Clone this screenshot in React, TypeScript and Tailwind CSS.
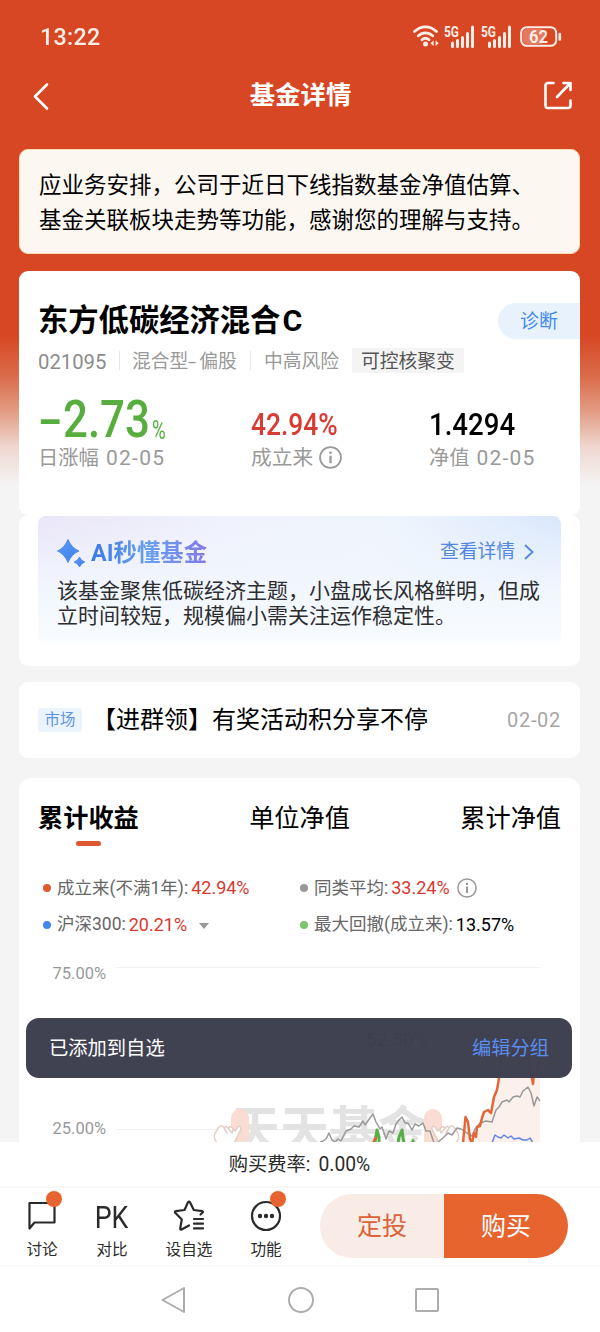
import type { ReactNode } from "react";

const NEWS = { tag: "市场", title: "【进群领】有奖活动积分享不停", date: "02-02" };

function StatusBar() {
    return (
        <div className="flex h-[60px] items-center justify-between pt-[14px] pr-[38px] pl-[40px] text-[#fdeee8]">
            <span className="origin-left scale-x-[0.970] text-[24px] font-medium leading-none tracking-[0.300px]">13:22</span>
            <svg width="150" height="26" viewBox="0 0 150 26" fill="none">
                {/* wifi */}
                <g stroke="currentColor" strokeWidth="2.800" strokeLinecap="round">
                    <path d="M2.500 7.500C9 1.200 18 1.200 24.500 7.500" />
                    <path d="M6.300 11.800C10.500 7.800 16.500 7.800 20.700 11.800" />
                    <path d="M10 15.800C12.200 13.900 14.800 13.900 17 15.800" />
                </g>
                <circle cx="13.500" cy="20" r="2.500" fill="currentColor" />
                <path d="M21.600 16.500v5.400L18.500 19.200zM23.600 16.500v5.400l3.100-2.700z" fill="currentColor" />
                {/* mobile signal, two sims */}
                {[0, 37].map(x => (
                    <g key={x} transform={`translate(${x} 0)`}>
                        <text
                            x="32"
                            y="12.500"
                            fill="currentColor"
                            fontSize="14"
                            fontWeight="700"
                            textLength="15"
                            lengthAdjust="spacingAndGlyphs"
                        >
                            5G
                        </text>
                        <path
                            d="M40.500 22.500v-3.500M45.500 22.500v-6M50.500 22.500v-9M55.500 22.500v-13M60.500 22.500V3"
                            stroke="currentColor"
                            strokeWidth="3"
                            strokeLinecap="round"
                        />
                    </g>
                ))}
                {/* battery */}
                <rect x="109.200" y="3.200" width="35" height="18.600" rx="5.500" stroke="currentColor" strokeWidth="2" />
                <rect x="111" y="5" width="21" height="15" rx="4" fill="currentColor" opacity="0.300" />
                <path d="M147.800 10v5.500" stroke="currentColor" strokeWidth="2.600" strokeLinecap="round" />
                <text
                    x="117"
                    y="19"
                    fill="currentColor"
                    fontSize="18"
                    fontWeight="600"
                    textLength="19"
                    lengthAdjust="spacingAndGlyphs"
                >
                    62
                </text>
            </svg>
        </div>
    );
}

function Header() {
    return (
        <header className="flex h-[72px] items-center justify-between pr-[27px] pl-[32px] text-white">
            <svg width="20" height="32" viewBox="0 0 20 32" fill="none" stroke="currentColor" strokeWidth="2.600" strokeLinecap="round" strokeLinejoin="round">
                <path d="M15 4.500L3 16.500l12 12" />
            </svg>
            <h1 className="pl-[6px] text-[25.400px] font-bold leading-none">基金详情</h1>
            <svg width="30" height="32" viewBox="0 0 30 32" fill="none" stroke="currentColor" strokeWidth="2.600" strokeLinecap="round" strokeLinejoin="round">
                <path d="M10.500 3H5a2.500 2.500 0 0 0-2.500 2.500v20A2.500 2.500 0 0 0 5 28h20a2.500 2.500 0 0 0 2.500-2.500V20.500" />
                <path d="M14 17L27 3.500M20.500 3H27.500V10" />
            </svg>
        </header>
    );
}

function InfoIcon({ size }: { size: number }) {
    return (
        <svg width={size} height={size} viewBox="0 0 22 22" fill="none" stroke="#999" strokeWidth="1.700">
            <circle cx="11" cy="11" r="10" />
            <path d="M11 9.300v7.200" strokeWidth="2.200" />
            <path d="M11 5.300v2.300" strokeWidth="2.200" />
        </svg>
    );
}

function FundCard() {
    return (
        <section className="mt-[17px] h-[244px] rounded-[9px] bg-white pt-[30px] pl-[19px]">
            <div className="flex h-[40px] items-center justify-between">
                <h2 className="text-[30.300px] font-bold leading-none text-black">
                    东方低碳经济混合<span className="pl-[2px]">C</span>
                </h2>
                <button type="button" className="h-[36px] w-[82px] rounded-l-full bg-[#e8f2fd] text-[19px] leading-none text-[#4289ee]">
                    诊断
                </button>
            </div>

            <div className="flex h-[39px] items-center text-[18.800px] leading-none text-[#999]">
                <span className="w-[81px] pt-[3px] text-[20.300px] text-[#8c8c8c]">021095</span>
                <span className="h-[19px] w-px bg-[#e6e6e6]" />
                <span className="w-[130px] pt-[3px] pl-[12px] whitespace-nowrap">
                    混合型<span className="inline-block w-[11px] origin-left scale-x-[1.600]">-</span>偏股
                </span>
                <span className="h-[19px] w-px bg-[#e6e6e6]" />
                <span className="w-[101px] pt-[3px] pl-[13px]">中高风险</span>
                <span className="flex h-[25px] items-center rounded-[2px] bg-[#f4f4f4] px-[9px] pt-[3px] text-[#555]">可控核聚变</span>
            </div>

            <div className="flex pt-[9px] leading-none">
                <div className="w-[213px]">
                    <div className="flex h-[56px] items-end text-[#57ae3e]">
                        <span className="w-[25px] origin-left scale-x-[1.450] text-[50px] font-medium">-</span>
                        <span className="w-[89px] origin-left scale-x-[0.860] text-[51px] font-medium">2.73</span>
                        <span className="origin-left scale-x-[0.720] pb-[2px] text-[26px]">%</span>
                    </div>
                    <div className="mt-[3px] text-[20.300px] text-[#999]">
                        日涨幅 <span className="pl-[2px] text-[21px] tracking-[1.300px]">02-05</span>
                    </div>
                </div>
                <div className="w-[178px]">
                    <div className="flex h-[56px] items-end text-[#d93a31]">
                        <span className="origin-left scale-x-[0.850] pb-[5px] text-[31px] font-medium">42.94%</span>
                    </div>
                    <div className="mt-[3px] flex gap-[6px] text-[20.700px] text-[#999]">
                        成立来
                        <span className="-mt-[2px]">
                            <InfoIcon size={23} />
                        </span>
                    </div>
                </div>
                <div>
                    <div className="flex h-[56px] items-end text-black">
                        <span className="origin-left scale-x-[0.890] pb-[5px] text-[31px] font-medium">1.4294</span>
                    </div>
                    <div className="mt-[3px] text-[20.300px] text-[#999]">
                        净值 <span className="pl-[2px] text-[21px] tracking-[1.200px]">02-05</span>
                    </div>
                </div>
            </div>
        </section>
    );
}

function AiCard() {
    return (
        <section className="h-[151px] rounded-[9px] bg-white px-[19px] pt-px">
            <div className="h-[130px] rounded-[8px] bg-[linear-gradient(180deg,transparent_0%,#f2f7fe_60%,#f7fbff_92%,#fff_100%),linear-gradient(90deg,#eae6f8_0%,#eff1fc_35%,#f0f5fd_65%,#d9e7fc_100%)] pt-[20px] pl-[19px]">
                <div className="flex h-[32px] items-center justify-between pr-[26px]">
                    <div className="flex items-center gap-[5px]">
                        <svg width="29" height="29" viewBox="0 0 29 29">
                            <defs>
                                <linearGradient id="spark" x1="0" y1="0" x2="1" y2="1">
                                    <stop offset="0" stopColor="#5c9af4" />
                                    <stop offset="1" stopColor="#3f7ee8" />
                                </linearGradient>
                            </defs>
                            <path d="M11 1.500Q14.500 10 22 13Q14.500 16 11 24.500Q7.500 16 0.500 13Q7.500 10 11 1.500z" fill="url(#spark)" stroke="#4f8ef0" strokeWidth="1" strokeLinejoin="round" />
                            <path d="M22.500 19Q24 22.600 27.800 24Q24 25.400 22.500 29Q21 25.400 17.200 24Q21 22.600 22.500 19z" fill="url(#spark)" stroke="#4684ea" strokeWidth="0.800" strokeLinejoin="round" />
                        </svg>
                        <span className="bg-linear-to-r from-[#3d78e6] via-[#66a0f0] to-[#8178e8] bg-clip-text pt-[7px] pb-1 text-[23.400px] font-bold leading-none text-transparent">
                            AI秒懂基金
                        </span>
                    </div>
                    <div className="flex items-center gap-[8px] text-[18.800px] leading-none text-[#5187e0]">
                        查看详情
                        <svg width="12" height="18" viewBox="0 0 12 18" fill="none" stroke="currentColor" strokeWidth="1.800">
                            <path d="M2 2l7.500 7L2 16" />
                        </svg>
                    </div>
                </div>
                <p className="pt-[11px] text-[21px] leading-[24.500px] whitespace-nowrap text-[#2d2d30]">
                    该基金聚焦低碳经济主题，小盘成长风格鲜明，但成
                    <br />
                    立时间较短，规模偏小需关注运作稳定性。
                </p>
            </div>
        </section>
    );
}

function NewsCard() {
    return (
        <section className="mt-[16px] flex h-[76px] items-center rounded-[9px] bg-white px-[19px] leading-none">
            <span className="flex h-[24px] w-[44px] items-center justify-center rounded-[3px] bg-[#ebf3fe] pt-[2px] text-[15.400px] text-[#5b93e8]">
                {NEWS.tag}
            </span>
            <span className="ml-[10px] flex-1 text-[24px] text-black">{NEWS.title}</span>
            <span className="pb-px text-[20px] tracking-[0.700px] text-[#a6a6a6]">{NEWS.date}</span>
        </section>
    );
}

type LegendProps = {
    dot: string;
    label: string;
    value: string;
    valueColor?: string;
    children?: ReactNode;
};

function Legend({ dot, label, value, valueColor = "text-[#d8392f]", children }: LegendProps) {
    return (
        <div className="flex h-[36.500px] items-center text-[17.500px] leading-none whitespace-nowrap text-[#666]">
            <span className={`mr-[6px] size-[8px] rounded-full ${dot}`} />
            {label}
            <span className={`ml-[3px] text-[18px] ${valueColor}`}>{value}</span>
            {children}
        </div>
    );
}

function WatermarkHand() {
    return (
        <>
            <rect x="231" y="1109" width="18" height="45" rx="9" fill="#f9ddd3" />
            <path
                d="M218 1144C213 1139 213 1135 217 1130L219 1127Q222 1124 224 1128Q226 1125 228 1128Q231 1125 233 1129L235 1131L238 1127Q241 1125 241 1129L237 1137Q235 1143 232 1144z"
                fill="#fff"
                stroke="#e2cdc6"
                strokeWidth="1.500"
                strokeLinejoin="round"
            />
            <path d="M224 1128l3 5M228 1128l3 4M233 1129l-1 4" fill="none" stroke="#e2cdc6" strokeWidth="1.500" strokeLinecap="round" />
        </>
    );
}

function Chart() {
    return (
        <svg className="block" width="561" height="199" viewBox="19 943 561 199">
            <g stroke="#f1f1f1">
                <path d="M116 967.500H540M116 1129.500H540" />
            </g>
            <g fill="#999" fontSize="16.500">
                <text x="52.500" y="979">75.00%</text>
                <text x="52.500" y="1133.500">25.00%</text>
            </g>
            {/* watermark */}
            <text x="231" y="1147" fill="#e3e3e3" fontSize="49" fontWeight="700">天天基金</text>
            <WatermarkHand />
            <g transform="translate(673 0) scale(-1 1)">
                <WatermarkHand />
            </g>
            <text x="366" y="1045.500" fill="#444" fontSize="19">52.50%</text>
            <path d="M437 1040H486L502 1056" fill="none" stroke="#111" />
            {/* area under the fund's line */}
            <path d="M463 1142L465 1118L471 1142L474 1135L480 1126L486 1112L492 1112L498 1078L504 1055L532 1055L540 1050V1142z" fill="#fbf0ec" />
            <g fill="none" strokeLinejoin="round">
                <path
                    d="M319 1143L323 1141L326 1139L329 1133L332 1140L335 1142L338 1139L341 1141L346 1131L351 1129L354 1126L359 1127L363 1121L365 1125L370 1118L373 1114L376 1122L380 1129L382 1127L386 1139L389 1131L393 1133L396 1124L399 1120L402 1117L405 1123L408 1123L412 1130L415 1124L419 1126L423 1123L426 1131L430 1131L434 1143M438 1142L443 1138L448 1133L452 1135L457 1128L461 1129L467 1133L472 1136L475 1129L480 1123L486 1121L492 1122L496 1110L499 1107L502 1102L507 1100L509 1102L513 1097L517 1096L520 1097L523 1091L528 1087L531 1093L534 1106L537 1097L540 1101"
                    stroke="#999"
                    strokeWidth="1.500"
                />
                <path d="M375 1143l1-7 1-6 2 7 0 6" stroke="#57ad48" strokeWidth="3" />
                <path d="M398 1143l1-6 3-7 1 8 1 5" stroke="#57ad48" strokeWidth="3" />
                <path d="M412 1143l1-3 1 2" stroke="#57ad48" strokeWidth="2" />
                <path d="M373 1143l3-6" stroke="#df6538" strokeWidth="2.500" />
                <path
                    d="M463 1143L465.500 1117L468 1122L470 1139L472 1143L474 1133L476 1137L477 1127L480 1126L482 1118L484 1112L488 1110L491 1113L494 1097L497 1090L499 1078L501 1061L504 1053L510 1056L517 1049L528 1056L533 1084L534 1072L537 1073L540 1060"
                    stroke="#e26636"
                    strokeWidth="2.500"
                />
                <path
                    d="M492 1143L495 1135L498 1137L501 1138L504 1135L508 1138L511 1136L514 1139L519 1138L523 1140L527 1140L530 1138L533 1143"
                    stroke="#6386e0"
                    strokeWidth="1.500"
                />
            </g>
        </svg>
    );
}

function ChartCard() {
    return (
        <section className="mt-[20px] h-[364px] overflow-hidden rounded-t-[12px] bg-white">
            <div className="flex h-[92px] justify-between px-[19px] pt-[28px] text-[25.200px] leading-none text-black">
                <div className="flex flex-col items-center">
                    <span className="font-bold">累计收益</span>
                    <span className="mt-[10px] h-[5px] w-[25px] rounded-full bg-[#df5730]" />
                </div>
                <span>单位净值</span>
                <span>累计净值</span>
            </div>
            <div className="grid grid-cols-[257px_1fr] pl-[24px]">
                <Legend dot="bg-[#df5a32]" label="成立来(不满1年):" value="42.94%" />
                <Legend dot="bg-[#999]" label="同类平均:" value="33.24%">
                    <span className="ml-[7px]">
                        <InfoIcon size={20} />
                    </span>
                </Legend>
                <Legend dot="bg-[#4487ec]" label="沪深300:" value="20.21%">
                    <span className="ml-[12px] mt-[2px] border-x-[5px] border-t-[6px] border-x-transparent border-t-[#999]" />
                </Legend>
                <Legend dot="bg-[#7ec36e]" label="最大回撤(成立来):" value="13.57%" valueColor="text-black" />
            </div>
            <Chart />
        </section>
    );
}

function NavItem({ label, badge, children }: { label: string; badge?: boolean; children: ReactNode }) {
    return (
        <div className="flex flex-col items-center">
            <div className="relative flex h-[34px] w-[34px] items-center justify-center">
                {children}
                {badge && <span className="absolute -top-[8px] -right-[3px] size-[16px] rounded-full bg-[#e7642f]" />}
            </div>
            <span className="mt-[10px] text-[15.600px] leading-none whitespace-nowrap">{label}</span>
        </div>
    );
}

function BottomBar() {
    return (
        <footer className="bg-white">
            <div className="flex h-[46px] items-center justify-center border-b-2 border-[#f7f7f7] pt-[2px] pr-px text-[19.300px] leading-none text-[#2a2a2a]">
                购买费率: <span className="ml-[8px]">0.00%</span>
            </div>
            <div className="flex h-[79px] justify-between border-b-2 border-[#fafafa] pr-[32px] pl-[25px] text-[#2a2a2a]">
                <div className="grid grid-cols-[34px_34px_34px_34px] gap-x-[36px] pt-[11px] [&>*:nth-child(3)]:translate-x-[7px] [&>*:nth-child(4)]:translate-x-[14px]">
                    <NavItem label="讨论" badge>
                        <svg width="34" height="34" viewBox="25 1199 34 34" fill="none" stroke="currentColor" strokeWidth="2.200" strokeLinejoin="round">
                            <path d="M29.500 1228.500V1203H54.500V1222.500H34.500z" />
                        </svg>
                    </NavItem>
                    <NavItem label="对比">
                        <span className="scale-x-[0.860] pt-[2px] pr-px text-[31px] leading-none">PK</span>
                    </NavItem>
                    <NavItem label="设自选">
                        <svg width="34" height="34" viewBox="172 1199 34 34" fill="none" stroke="currentColor" strokeWidth="2.200" strokeLinejoin="round" strokeLinecap="round">
                            <path d="M189 1225.500L181.500 1229.500Q180 1230 180.200 1228.500L181.800 1219.500L175 1212.500Q174.500 1211.500 175.800 1211.200L184.500 1210L188 1202.300Q189 1200.800 190 1202.300L193.800 1210L202.300 1211.200Q203.500 1211.500 202.600 1212.500L200.500 1214.500" />
                            <path d="M194 1219h9M194 1223.700h9M194 1228.400h9" />
                        </svg>
                    </NavItem>
                    <NavItem label="功能" badge>
                        <svg width="34" height="34" viewBox="0 0 34 34" fill="none" stroke="currentColor" strokeWidth="2.200">
                            <circle cx="17" cy="17" r="14" />
                            <g fill="currentColor" stroke="none">
                                <circle cx="11" cy="17" r="2.200" />
                                <circle cx="17" cy="17" r="2.200" />
                                <circle cx="23" cy="17" r="2.200" />
                            </g>
                        </svg>
                    </NavItem>
                </div>
                <div className="mt-[6px] flex h-[64px] w-[248px] overflow-hidden rounded-full text-[25px] leading-none">
                    <button type="button" className="flex-1 bg-[#f9ece7] text-[#dc6238]">定投</button>
                    <button type="button" className="flex-1 bg-[#e7642f] text-white">购买</button>
                </div>
            </div>
            <div className="flex h-[65px] items-center justify-center gap-[101px] pr-px">
                <svg width="26" height="28" viewBox="0 0 26 28" fill="none" stroke="#adadad" strokeWidth="2" strokeLinejoin="round">
                    <path d="M23 2v24L1.500 14z" />
                </svg>
                <span className="size-[26px] rounded-full border-2 border-[#adadad]" />
                <span className="size-[24px] rounded-[2px] border-2 border-[#adadad]" />
            </div>
        </footer>
    );
}

export default function App() {
    return (
        <div className="relative h-[1332px] w-[600px] overflow-hidden bg-[#f4f4f4] font-[Roboto,'Noto_Sans_CJK_SC',sans-serif]">
            <div className="h-[1142px] overflow-hidden bg-[linear-gradient(#d84723_0px,#d84723_335px,#da6a48_375px,#e29a81_410px,#efd7cf_447px,#f4f4f4_485px)]">
                <StatusBar />
                <Header />
                <main className="pt-[17px] pr-[20px] pl-[19px]">
                    <div className="h-[105px] rounded-[9px] border border-[#f6dcae] bg-[#fdf7f2] pt-[18px] pl-[19px] text-[22.500px] leading-[35px] whitespace-nowrap text-black">
                        应业务安排，公司于近日下线指数基金净值估算、
                        <br />
                        基金关联板块走势等功能，感谢您的理解与支持。
                    </div>
                    <FundCard />
                    <AiCard />
                    <NewsCard />
                    <ChartCard />
                </main>
            </div>
            <BottomBar />

            {/* toast */}
            <div className="absolute top-[1018px] left-[26px] flex h-[60px] w-[546px] items-center justify-between rounded-[13px] bg-[#3d3e4e]/98 pt-[2px] pr-[23px] pl-[23px] text-[19.300px] leading-none">
                <span className="text-white">已添加到自选</span>
                <button type="button" className="text-[#5a8df0]">编辑分组</button>
            </div>
        </div>
    );
}
